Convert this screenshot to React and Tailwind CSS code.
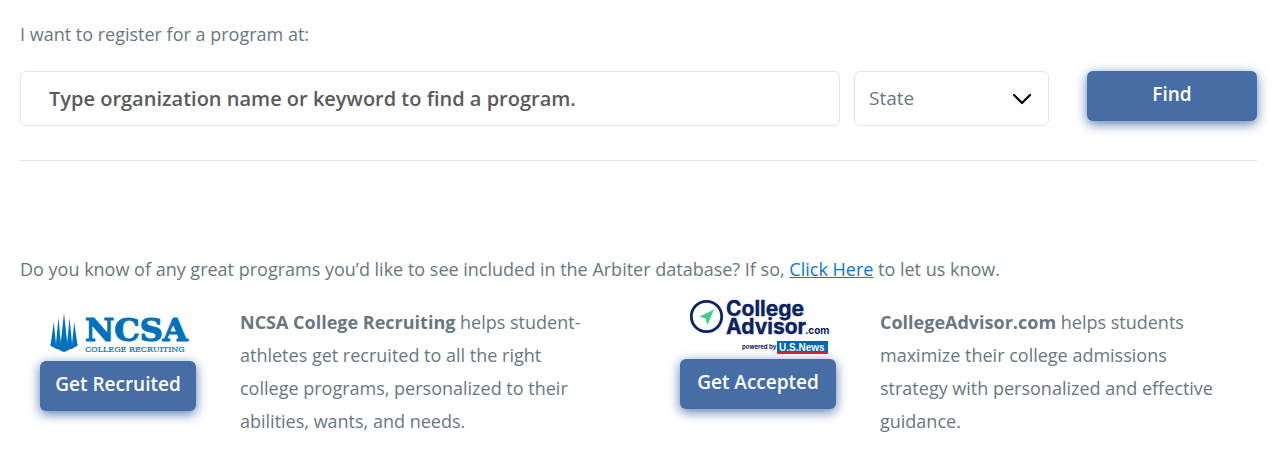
import { useState } from 'react';
import clsx from 'clsx';

const STATES = ['California', 'Colorado', 'Florida', 'New York', 'Texas', 'Utah'];

function NcsaLogo() {
  return (
    <svg width="140" height="46" viewBox="0 0 140 46" className="overflow-visible" role="img" aria-label="NCSA College Recruiting">
      <g fill="#0072bc">
        <path d="M3.800 12 L6.500 39 L0.500 35.500 Z" />
        <path d="M8.500 7.500 L11.500 40 L5.500 38.500 Z" />
        <path d="M14 3 L18 40 L14 42 L10 40 Z" />
        <path d="M19.500 7.500 L22.500 38.500 L16.500 40 Z" />
        <path d="M24.200 12 L27.500 35.500 L21.500 39 Z" />
        <path d="M0.800 33 L14 38 L27.200 33 L27.500 35.500 L14 42 L0.500 35.500 Z" />
      </g>
      <g fill="#0072bc" stroke="#0072bc" className="font-['DejaVu_Serif',serif]">
        <text x="35" y="31" strokeWidth="1.200" className="text-[32px] font-bold">NCSA</text>
        <text x="35" y="42" strokeWidth="0.200" className="text-[8px]">COLLEGE RECRUITING</text>
      </g>
    </svg>
  );
}

function CollegeAdvisorLogo() {
  return (
    <svg width="140" height="56" viewBox="0 0 140 56" className="overflow-visible" role="img" aria-label="CollegeAdvisor.com powered by U.S. News">
      <circle cx="16.500" cy="18.500" r="15.200" fill="none" stroke="#0b2265" strokeWidth="2.800" />
      <path d="M24 11.500 L17.500 27 L15.500 20.500 L9.500 18.500 Z" fill="#3ecf8e" />
      <g fill="#0b2265" className="font-['Inter',sans-serif] font-bold">
        <text x="36" y="18" stroke="#0b2265" strokeWidth="0.400" className="text-[21px]">College</text>
        <text x="36" y="36" stroke="#0b2265" strokeWidth="0.400" className="text-[21px]">Advisor</text>
        <text x="115" y="36" className="text-[10px]">.com</text>
        <text x="52" y="51" className="text-[6px]">powered by</text>
      </g>
      <rect x="87" y="43" width="51" height="11" fill="#0067b1" />
      <rect x="87" y="54" width="51" height="2" fill="#d9232e" />
      <text x="89" y="53" fill="#fff" className="font-['Liberation_Sans',sans-serif] text-[10px] font-bold">U.S.News</text>
    </svg>
  );
}

function Button({ className, children, ...props }) {
  return (
    <button
      className={clsx(
        'h-[50px] rounded-md bg-[#466da6] pb-1 text-[19px] font-semibold text-white shadow-[0_3px_12px_rgba(70,109,166,0.9)] hover:bg-[#3b5f94]',
        className
      )}
      {...props}
    >
      {children}
    </button>
  );
}

function Partner({ logo, action, children }) {
  return (
    <div className="flex gap-11 pl-5">
      <div className="flex w-[156px] shrink-0 flex-col">
        {logo}
        <Button type="button" className="w-full">{action}</Button>
      </div>
      <p className="max-w-[350px] pt-2 leading-[33px]">{children}</p>
    </div>
  );
}

export default function App() {
  const [query, setQuery] = useState('');
  const [region, setRegion] = useState('');

  return (
    <main className="bg-white pt-[18px] pr-4 pb-8 pl-5 font-['Open_Sans',sans-serif] text-[18px] text-[#687782]">
      <form onSubmit={(e) => e.preventDefault()}>
        <label htmlFor="query" className="block leading-8">I want to register for a program at:</label>
        <div className="mt-[21px] flex items-start border-b border-[#dfe5ea] pb-[34px]">
          <input
            id="query"
            type="text"
            value={query}
            onChange={(e) => setQuery(e.target.value)}
            placeholder="Type organization name or keyword to find a program."
            className="h-[55px] min-w-0 flex-1 rounded-md border border-[#dfe5ea] px-7 text-[20px] font-semibold text-[#5a5a5a] placeholder:text-[#5a5a5a]"
          />
          <div className="relative ml-3.5 w-[195px]">
            <select
              aria-label="State"
              value={region}
              onChange={(e) => setRegion(e.target.value)}
              className="h-[55px] w-full appearance-none rounded-md border border-[#dfe5ea] bg-white px-3.5 text-[19px]"
            >
              <option value="">State</option>
              {STATES.map((s) => (
                <option key={s}>{s}</option>
              ))}
            </select>
            <svg className="pointer-events-none absolute top-[22px] right-[17px]" width="20" height="12" viewBox="0 0 20 12" fill="none" stroke="#000" strokeWidth="2.200" strokeLinecap="round" strokeLinejoin="round">
              <path d="M2 2 L10 10 L18 2" />
            </svg>
          </div>
          <Button type="submit" className="ml-[38px] w-[170px]">Find</Button>
        </div>
      </form>

      <p className="mt-[92px] leading-[33px]">
        Do you know of any great programs you’d like to see included in the Arbiter database? If so,{' '}
        <a href="#suggest" className="text-[#0078e0] underline">Click Here</a> to let us know.
      </p>

      <section className="mt-3 grid grid-cols-2 gap-[43px]">
        <Partner logo={<div className="ml-2.5 pt-3 pb-[5px]"><NcsaLogo /></div>} action="Get Recruited">
          <strong>NCSA College Recruiting</strong> helps student-athletes get recruited to all the right college programs, personalized to their abilities, wants, and needs.
        </Partner>
        <Partner logo={<div className="ml-2.5 pb-[5px]"><CollegeAdvisorLogo /></div>} action="Get Accepted">
          <strong>CollegeAdvisor.com</strong> helps students maximize their college admissions strategy with personalized and effective guidance.
        </Partner>
      </section>
    </main>
  );
}
